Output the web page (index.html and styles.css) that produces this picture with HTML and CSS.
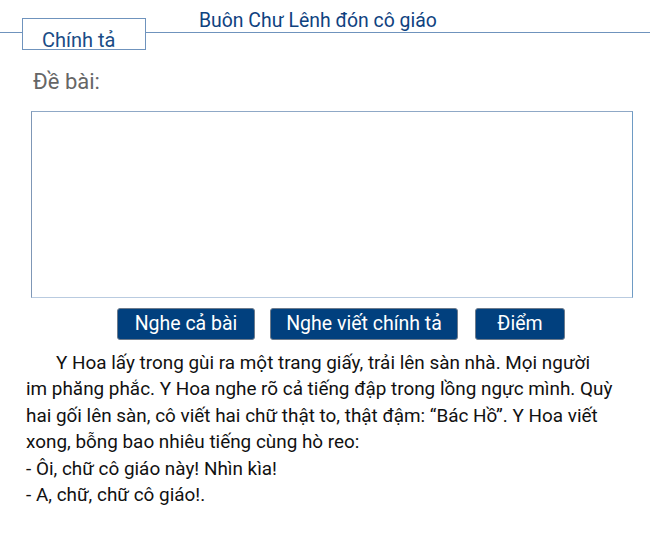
FILE: index.html
```html
<!DOCTYPE html>
<html lang="vi">
<head>
<meta charset="utf-8">
<link rel="stylesheet" href="styles.css">
</head>
<body>
<div class="header">
  <div class="tab">Chính tả</div>
  <div class="title">Buôn Chư Lênh đón cô giáo</div>
</div>
<div class="label">Đề bài:</div>
<div class="answer"></div>
<div class="buttons">
  <button class="btn btn1">Nghe cả bài</button>
  <button class="btn btn2">Nghe viết chính tả</button>
  <button class="btn btn3">Điểm</button>
</div>
<div class="text">
  <p class="para">Y Hoa lấy trong gùi ra một trang giấy, trải lên sàn nhà. Mọi người<br>im phăng phắc. Y Hoa nghe rõ cả tiếng đập trong lồng ngực mình. Quỳ<br>hai gối lên sàn, cô viết hai chữ thật to, thật đậm: “Bác Hồ”. Y Hoa viết<br>xong, bỗng bao nhiêu tiếng cùng hò reo:</p>
  <p class="line">- Ôi, chữ cô giáo này! Nhìn kìa!</p>
  <p class="line">- A, chữ, chữ cô giáo!.</p>
</div>
</body>
</html>
```
FILE: styles.css
```css
html, body {
  margin: 0;
  padding: 0;
  background: #fff;
  font-family: Roboto, "Noto Sans", sans-serif;
}
.header {
  position: relative;
  height: 50px;
}
.header::before {
  content: "";
  position: absolute;
  left: 0;
  right: 0;
  top: 32px;
  height: 1px;
  background: #6f93bd;
}
.tab {
  position: absolute;
  left: 22px;
  top: 18px;
  width: 122px;
  height: 30px;
  border: 1px solid #6f93bd;
  background: #fff;
  color: #1a4c86;
  font-size: 20px;
  line-height: 42px;
  text-indent: 19px;
  white-space: nowrap;
}
.title {
  position: absolute;
  left: 199px;
  top: 8px;
  color: #0f427f;
  font-size: 19.4px;
  line-height: 26px;
  white-space: nowrap;
}
.label {
  margin: 19px 0 0 33px;
  color: #666;
  font-size: 22px;
  line-height: 26px;
}
.answer {
  margin: 16px 0 0 31px;
  width: 600px;
  height: 185px;
  border: 1px solid #8fa8c6;
  border-left-color: #7f97b6;
  border-right-color: #6e9bc4;
  border-bottom-color: #b9cbe0;
}
.buttons {
  display: flex;
  margin: 10px 0 0 117px;
  gap: 15px;
}
.btn {
  height: 32px;
  padding: 0;
  background: #01407e;
  color: #fff;
  border: 1px solid #6d7b8c;
  border-radius: 3px;
  font-family: Roboto, "Noto Sans", sans-serif;
  font-size: 19.5px;
  line-height: 28px;
  white-space: nowrap;
}
.btn1 { width: 138px; }
.btn2 { width: 188px; }
.btn3 { width: 90px; margin-left: 2px; }
.text {
  margin: 10px 0 0 26px;
  width: 620px;
  color: #111;
  font-size: 18.9px;
  line-height: 26.4px;
  white-space: nowrap;
}
.text p {
  margin: 0;
}
.para {
  text-indent: 30px;
}
```
